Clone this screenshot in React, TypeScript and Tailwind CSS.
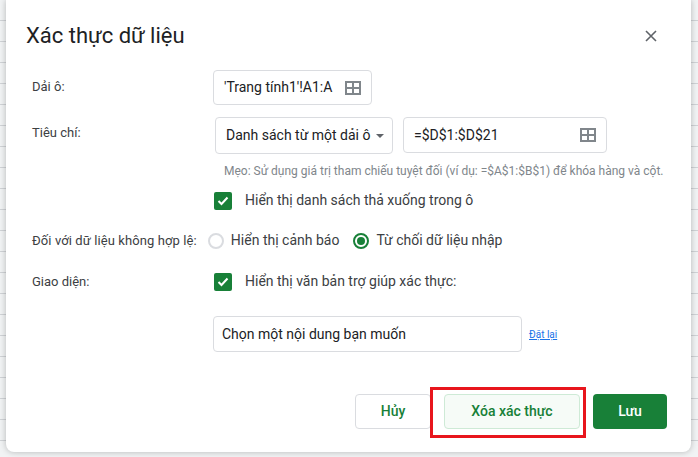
import React from 'react';

// Google Sheets "Data validation" dialog, Vietnamese locale.

function GridIcon() {
  return (
    <svg width="16" height="14" viewBox="0 0 16 14" className="shrink-0">
      <path d="M1 1h14v12H1z M8 1v12 M1 7h14" fill="none" stroke="#80868b" strokeWidth="2" />
    </svg>
  );
}

function Check() {
  return (
    <span className="flex h-[18px] w-[18px] shrink-0 items-center justify-center rounded-[2px] bg-[#188038]">
      <svg width="12" height="10" viewBox="0 0 12 10">
        <path d="M1.5 5l3 3 6-6.5" fill="none" stroke="#fff" strokeWidth="2" />
      </svg>
    </span>
  );
}

export default function App() {
  return (
    <div
      className="relative h-[457px] w-[698px] overflow-hidden bg-[#f1f3f4]"
      style={{ fontFamily: 'Roboto, "Noto Sans", sans-serif' }}
    >
      <div className="absolute inset-0 bg-[repeating-linear-gradient(to_bottom,transparent_0,transparent_20px,#d0d3d6_20px,#d0d3d6_21px)]" />
      <div className="absolute left-[6px] top-0 h-[452px] w-[685px] rounded-b-[8px] bg-white shadow-[0_0_6px_rgba(0,0,0,0.25)]">
        <div className="flex items-center justify-between pl-[20px] pr-[34px] pt-[22px]">
          <h1 className="text-[22px] leading-[28px] text-[#202124]">Xác thực dữ liệu</h1>
          <svg width="12" height="12" viewBox="0 0 12 12">
            <path d="M1 1l10 10M11 1L1 11" stroke="#5f6368" strokeWidth="1.6" />
          </svg>
        </div>

        <div className="mt-[20px] flex items-center text-[13px] text-[#3c4043]">
          <span className="w-[207px] pl-[26px] self-start pt-[7px]">Dải ô:</span>
          <div className="flex h-[35px] w-[159px] items-center justify-between rounded-[4px] border border-[#dadce0] px-[10px] text-[14px] text-[#202124]">
            <span className="overflow-hidden whitespace-nowrap w-[112px]">'Trang tính1'!A1:A</span>
            <GridIcon />
          </div>
        </div>

        <div className="mt-[12px] flex text-[13px] text-[#3c4043]">
          <span className="w-[209px] pl-[26px] pt-[6px]">Tiêu chí:</span>
          <div className="flex h-[37px] w-[178px] items-center justify-between rounded-[4px] border border-[#dadce0] pl-[10px] pr-[8px] text-[14px] text-[#202124]">
            <span className="whitespace-nowrap">Danh sách từ một dải ô</span>
            <svg width="8" height="4" viewBox="0 0 8 4"><path d="M0 0h8L4 4z" fill="#5f6368" /></svg>
          </div>
          <div className="ml-[10px] flex h-[36px] w-[204px] items-center justify-between rounded-[4px] border border-[#dadce0] pl-[10px] pr-[10px] text-[14px] text-[#202124]">
            <span>=$D$1:$D$21</span>
            <GridIcon />
          </div>
        </div>

        <p className="mt-[9px] pl-[218px] text-[12px] leading-[16px] text-[#80868b] whitespace-nowrap">
          Mẹo: Sử dụng giá trị tham chiếu tuyệt đối (ví dụ: =$A$1:$B$1) để khóa hàng và cột.
        </p>

        <div className="mt-[11px] flex items-center gap-[13px] pl-[208px] text-[14px] text-[#3c4043]">
          <Check />
          <span>Hiển thị danh sách thả xuống trong ô</span>
        </div>

        <div className="mt-[19px] flex items-center text-[13px] text-[#3c4043]">
          <span className="pl-[26px] pr-[11px] whitespace-nowrap tracking-[0.1px]">Đối với dữ liệu không hợp lệ:</span>
          <span className="h-[16px] w-[16px] rounded-full border-2 border-[#dadce0]" />
          <span className="ml-[7px] text-[14px]">Hiển thị cảnh báo</span>
          <span className="ml-[14px] flex h-[16px] w-[16px] items-center justify-center rounded-full border-2 border-[#188038]">
            <span className="h-[8px] w-[8px] rounded-full bg-[#188038]" />
          </span>
          <span className="ml-[7px] text-[14px]">Từ chối dữ liệu nhập</span>
        </div>

        <div className="mt-[20px] flex items-center text-[13px] text-[#3c4043]">
          <span className="w-[208px] pl-[26px]">Giao diện:</span>
          <Check />
          <span className="ml-[13px] text-[14px]">Hiển thị văn bản trợ giúp xác thực:</span>
        </div>

        <div className="mt-[24px] flex items-center pl-[207px]">
          <div className="flex h-[36px] w-[309px] items-center rounded-[4px] border border-[#dadce0] px-[8px] text-[14px] text-[#202124]">
            Chọn một nội dung bạn muốn
          </div>
          <span className="ml-[7px] text-[10px] text-[#1a73e8] underline">Đặt lại</span>
        </div>

        <div className="mt-[42px] flex justify-end gap-[13px] pr-[24px] text-[14px] font-medium">
          <button className="h-[35px] w-[76px] rounded-[4px] border border-[#dadce0] text-[#188038]">Hủy</button>
          <div className="relative">
            <button className="h-[35px] w-[136px] rounded-[4px] border border-[#ceead6] bg-[#f6fbf7] text-[#188038]">Xóa xác thực</button>
            <div className="pointer-events-none absolute left-[-14px] top-[-7px] h-[51px] w-[156px] border-[3px] border-[#e8161d]" />
          </div>
          <button className="h-[35px] w-[74px] rounded-[4px] bg-[#188038] text-white">Lưu</button>
        </div>
      </div>
    </div>
  );
}
